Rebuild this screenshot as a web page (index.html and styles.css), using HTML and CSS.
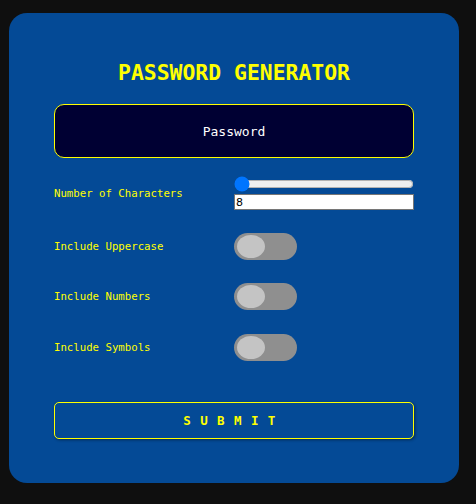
FILE: index.html
```html
<!DOCTYPE html>
<html>
<head>
<meta charset="utf-8">
<link rel="stylesheet" href="styles.css">
</head>
<body>
<div class="card">
  <h1 class="title">PASSWORD GENERATOR</h1>
  <div class="output">Password</div>
  <div class="row row-chars">
    <label class="label">Number of Characters</label>
    <div class="ctrl">
      <input class="range" type="range" min="8" max="32" value="8">
      <input class="num" type="number" min="8" max="32" value="8">
    </div>
  </div>
  <div class="row">
    <label class="label">Include Uppercase</label>
    <div class="ctrl"><span class="toggle"><span class="knob"></span></span></div>
  </div>
  <div class="row">
    <label class="label">Include Numbers</label>
    <div class="ctrl"><span class="toggle"><span class="knob"></span></span></div>
  </div>
  <div class="row">
    <label class="label">Include Symbols</label>
    <div class="ctrl"><span class="toggle"><span class="knob"></span></span></div>
  </div>
  <button class="submit">SUBMIT</button>
</div>
</body>
</html>
```

FILE: styles.css
```css
html, body {
  margin: 0;
  padding: 0;
  background: #0f0f0f;
  height: 100%;
}
body {
  font-family: "DejaVu Sans Mono", monospace;
  padding: 13px 17px 21px 9px;
  box-sizing: border-box;
}
.card {
  background: #044a96;
  border-radius: 18px;
  width: 450px;
  height: 470px;
  box-sizing: border-box;
  padding: 0 45px;
  display: flex;
  flex-direction: column;
}
.title {
  margin: 48px 0 0;
  text-align: center;
  color: #ffff00;
  font-size: 21.4px;
  font-weight: bold;
  line-height: 24px;
}
.output {
  margin-top: 19px;
  height: 54px;
  box-sizing: border-box;
  border: 1px solid #ffff00;
  border-radius: 10px;
  background: #000033;
  color: #ffffff;
  font-size: 13px;
  display: flex;
  align-items: center;
  justify-content: center;
}
.row {
  display: grid;
  grid-template-columns: 180px 180px;
  align-items: center;
  height: 50.5px;
}
.row-chars {
  margin-top: 17px;
  height: 36px;
  margin-bottom: 10px;
}
.label {
  color: #ffff00;
  font-size: 10.7px;
}
.ctrl {
  display: flex;
  flex-direction: column;
  align-items: flex-start;
}
.range {
  width: 180px;
  margin: 0;
  height: 16px;
}
.num {
  width: 180px;
  height: 16px;
  box-sizing: border-box;
  margin: 2px 0 0;
  padding: 0 1px;
  border: 1px solid #767676;
  font-family: "DejaVu Sans", sans-serif;
  font-size: 11px;
  background: #fff;
  color: #000;
}
.toggle {
  display: block;
  width: 63px;
  height: 27px;
  border-radius: 14px;
  background: #8f8f8f;
  position: relative;
}
.knob {
  position: absolute;
  left: 3px;
  top: 2px;
  width: 28px;
  height: 23px;
  border-radius: 50%;
  background: #c4c4c4;
}
.submit {
  margin-top: 29px;
  height: 37px;
  box-sizing: border-box;
  background: transparent;
  border: 1px solid #ffff00;
  border-radius: 5px;
  box-shadow: 1px 1px 3px rgba(0,0,0,0.45);
  color: #ffff00;
  font-family: "DejaVu Sans Mono", monospace;
  font-weight: bold;
  font-size: 12.5px;
  letter-spacing: 9.4px;
  padding: 0;
}
```
